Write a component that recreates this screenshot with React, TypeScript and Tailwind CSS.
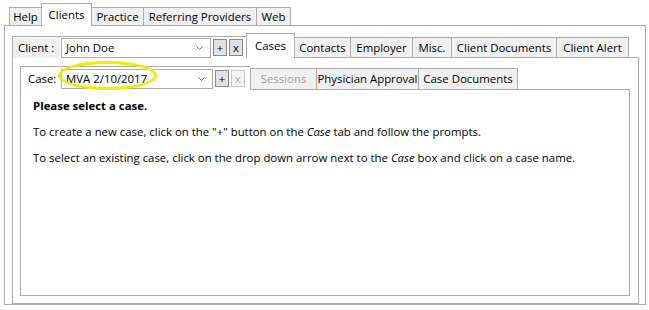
import React from "react";

const B = "border-[#acacac]";

function Tab({ label, w, h, selected, disabled, last }: { label: string; w: number; h: number; selected?: boolean; disabled?: boolean; last?: boolean }) {
  return (
    <div
      style={{ width: w, height: h }}
      className={
        "flex items-center justify-center border-t border-l border-[#acacac] whitespace-nowrap " +
        (last ? "border-r " : "") +
        (selected ? "bg-white -mb-px relative z-10 border-r " : "bg-[#f0f0f0] ") +
        (disabled ? "text-[#a0a0a0]" : "text-black")
      }
    >
      {label}
    </div>
  );
}

function Chevron() {
  return (
    <svg width="7" height="4" viewBox="0 0 7 4" className="shrink-0">
      <path d="M0.5 0.5 L3.5 3.5 L6.5 0.5" fill="none" stroke="#707070" strokeWidth="1" />
    </svg>
  );
}

function Combo({ value, w }: { value: string; w: number }) {
  return (
    <div style={{ width: w }} className="h-[20px] border border-[#acacac] bg-white flex items-center pl-[4px] pr-[7px]">
      <span className="flex-1 text-black">{value}</span>
      <Chevron />
    </div>
  );
}

function Btn({ label, disabled }: { label: string; disabled?: boolean }) {
  return (
    <div
      className={
        "w-[14px] h-[17px] flex items-center justify-center border leading-none " +
        (disabled ? "border-[#c8c8c8] bg-[#f4f4f4] text-[#b0b0b0]" : "border-[#8a8a8a] bg-[#e1e1e1] text-black")
      }
    >
      {label}
    </div>
  );
}

export default function App() {
  return (
    <div
      className="w-[649px] h-[310px] bg-white relative pt-[3px] pl-[4px] text-[11.4px] text-black"
      style={{ fontFamily: '"Segoe UI", "Open Sans", "Noto Sans", sans-serif' }}
    >
      {/* top tabs */}
      <div className="flex items-end h-[22px] pl-[5px]">
        <Tab label="Help" w={32} h={18} />
        <Tab label="Clients" w={51} h={23} selected />
        <div className="-ml-px flex items-end">
          <Tab label="Practice" w={52} h={18} />
          <Tab label="Referring Providers" w={113} h={18} />
          <Tab label="Web" w={35} h={18} last />
        </div>
      </div>
      {/* outer panel */}
      <div className={"w-[642px] h-[280px] border " + B + " pl-[7px] pr-[6px] pt-[7px] flex flex-col"}>
        {/* client row */}
        <div className="flex items-end h-[24px] shrink-0">
          <div className={"w-[234px] h-[22px] border-t border-l " + B + " flex items-center -mb-px relative z-10 bg-white"}>
            <div className="h-[20px] w-[47px] bg-[#f0f0f0] flex items-center pl-[5px]">Client :</div>
            <div className="ml-[1px]">
              <Combo value="John Doe" w={150} />
            </div>
            <div className="ml-[2px] flex gap-[2px]">
              <Btn label="+" />
              <Btn label="x" />
            </div>
          </div>
          <Tab label="Cases" w={49} h={25} selected />
          <div className="-ml-px flex items-end">
            <Tab label="Contacts" w={56} h={20} />
            <Tab label="Employer" w={62} h={20} />
            <Tab label="Misc." w={39} h={20} />
            <Tab label="Client Documents" w={105} h={20} />
            <Tab label="Client Alert" w={73} h={20} last />
          </div>
        </div>
        {/* client panel */}
        <div className={"w-[627px] flex-1 border " + B + " pl-[7px] pr-[8px] pt-[7px] pb-[7px] flex flex-col"}>
          <div className="flex items-end h-[24px] shrink-0 relative">
            <div className={"w-[230px] h-[24px] border-t border-l " + B + " flex items-center -mb-px relative z-10 bg-white"}>
              <div className="w-[40px] pl-[7px]">Case:</div>
              <Combo value="MVA 2/10/2017" w={152} />
              <div className="ml-[2px] flex gap-[2px]">
                <Btn label="+" />
                <Btn label="x" disabled />
              </div>
            </div>
            <div className="flex items-end">
              <Tab label="Sessions" w={66} h={21} disabled />
              <Tab label="Physician Approval" w={102} h={21} />
              <Tab label="Case Documents" w={100} h={21} last />
            </div>
            {/* yellow annotation ellipse */}
            <div className="absolute left-[38px] top-[-4px] w-[99px] h-[29px] rounded-[50%] border-[3px] border-[#f0ec00] pointer-events-none z-20" />
          </div>
          <div className={"w-[610px] flex-1 border " + B + " pl-[12px] pt-[8px]"}>
            <p className="font-bold leading-[16px]">Please select a case.</p>
            <p className="leading-[16px] mt-[10px]">
              To create a new case, click on the "+" button on the <i>Case</i> tab and follow the prompts.
            </p>
            <p className="leading-[16px] mt-[10px]">
              To select an existing case, click on the drop down arrow next to the <i>Case</i> box and click on a case name.
            </p>
          </div>
        </div>
      </div>
    </div>
  );
}
